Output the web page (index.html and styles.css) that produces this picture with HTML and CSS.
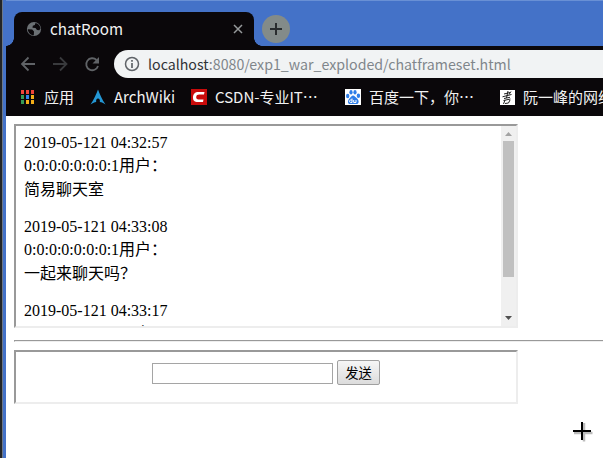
FILE: index.html
```
<!DOCTYPE html>
<html lang="zh-CN">
<head>
<meta charset="utf-8">
<title>chatRoom</title>
<link rel="stylesheet" href="styles.css">
</head>
<body>
<div class="desktop">
<div class="backdrop"></div>
<main class="window">
  <header class="tabs">
    <div class="tab">
      <svg class="globe" width="16" height="16" viewBox="0 0 16 16"><circle cx="8" cy="8" r="7.100" fill="#6b7074"/><path d="M1.800 8.200l4.400.3 1.800 2-.2 3.800C4.500 14 2 11.500 1.800 8.200zM9.500 2l-.7 2-2 .8-.3 2 3 .3 1.500 1.900 2.200.2 1.300-1.400C14.300 5 12.500 2.500 9.500 2z" fill="#0a070a"/></svg>
      <span class="title">chatRoom</span>
      <svg class="close" width="10" height="10" viewBox="0 0 10 10"><path d="M1 1l8 8M9 1l-8 8" stroke="#96999b" stroke-width="1.500"/></svg>
    </div>
    <div class="newtab"><svg width="28" height="28" viewBox="0 0 28 28"><path d="M14 8v12M8 14h12" stroke="#292d2e" stroke-width="2"/></svg></div>
  </header>
  <nav class="toolbar">
    <svg class="nav" width="88" height="28" viewBox="0 0 88 28" fill="none" stroke-width="1.800"><path d="M15 14H2.500M8.500 7.500L2 14l6.500 6.500" stroke="#606367"/><path d="M33 14h13M40 7.500l6.500 6.500-6.500 6.500" stroke="#393a3d"/><path d="M76.500 10A6 6 0 1 0 78 16" stroke="#606367"/><path d="M79 7v6.500h-6.500z" fill="#606367"/></svg>
    <div class="address">
      <svg width="16" height="16" viewBox="0 0 16 16"><circle cx="8" cy="8" r="6.500" fill="none" stroke="#5f6368" stroke-width="1.500"/><path d="M8 7v5M8 4v1.800" stroke="#5f6368" stroke-width="1.700"/></svg>
      <span class="url"><b>localhost</b>:8080/exp1_war_exploded/chatframeset.html</span>
    </div>
  </nav>
  <div class="bookmarks">
    <div class="bookmark apps"><svg width="14" height="14" viewBox="0 0 14 14"><path d="M0 0h3v4H0zM5 0h3v4H5zM10 0h3v4h-3z" fill="#f04439"/><path d="M0 5h3v4H0zM0 10h3v4H0z" fill="#359a55"/><path d="M5 5h3v4H5z" fill="#3184ec"/><path d="M10 5h3v4h-3zM5 10h3v4H5zM10 10h3v4h-3z" fill="#f5ae18"/></svg><span>应用</span></div>
    <div class="bookmark arch"><svg width="16" height="16" viewBox="0 0 16 16"><path d="M8 .5C6.500 5 3.500 11 .5 15.500c2.500-1.500 4-2.200 5.700-2.500-.4-2 .4-3.500 1.800-3.500s2.300 1.500 1.800 3.500c2 .3 3.500 1 5.700 2.500C12.500 11 9.500 5 8 .5z" fill="#2497d5"/></svg><span>ArchWiki</span></div>
    <div class="bookmark csdn"><svg width="16" height="16" viewBox="0 0 16 16"><path d="M0 0h16v16H0z" fill="#c90b0b"/><path d="M13 5.500l.5-2.500H7.500C4 3 2 5 2 8.500S4 13 6.500 13H12l.5-2.500H7.500c-1.500 0-2.500-.9-2.300-2.500.2-1.800 1.300-2.500 3-2.500z" fill="#fff"/></svg><span>CSDN-专业IT⋯</span></div>
    <div class="bookmark baidu"><svg width="16" height="16" viewBox="0 0 16 16"><path d="M0 0h16v16H0z" fill="#fff"/><g fill="#2e7de8"><ellipse cx="2.700" cy="7" rx="1.700" ry="2.200"/><ellipse cx="6" cy="3.300" rx="1.600" ry="2.300"/><ellipse cx="10" cy="3.300" rx="1.600" ry="2.300"/><ellipse cx="13.400" cy="6.800" rx="1.700" ry="2.200"/><path d="M8 6.500c-1.500 0-2 1.500-3.300 2.700C2.500 11 2.300 15 5 15c2 0 4-.2 6 0 3.500.2 3.300-4 .8-5.800C10.300 8 9.500 6.500 8 6.500z"/></g><path d="M7 9.500v4H5.500c-1.300 0-1.300-2.500 0-2.500H7M8.700 11v2.500H11V11" fill="none" stroke="#fff"/></svg><span>百度一下，你⋯</span></div>
    <div class="bookmark blog"><svg width="15" height="15" viewBox="0 0 15 15"><path d="M0 0h15v15H0z" fill="#fff"/><path d="M4 4l6-1.500M2.500 6.800l9-2.300M4 8.500l6-1.200M8 1L6.500 8M3.500 10.500l7-1.500M5 10l-1.500 4M5 13.500l3.500-.5 1.500-3M11 1.500l-2 3" fill="none" stroke="#202020"/></svg><span>阮一峰的网络</span></div>
  </div>
  <section class="page">
    <div class="frame messages">
      <div class="log">
        <p><span class="time">2019-05-121 04:32:57</span><span>0:0:0:0:0:0:0:1用户：</span><span>简易聊天室</span></p>
        <p><span class="time">2019-05-121 04:33:08</span><span>0:0:0:0:0:0:0:1用户：</span><span>一起来聊天吗？</span></p>
        <p><span class="time">2019-05-121 04:33:17</span><span>0:0:0:0:0:0:0:1用户：</span></p>
      </div>
      <div class="scrollbar">
        <svg width="15" height="15" viewBox="0 0 15 15"><path d="M4 10h7L7.500 6z" fill="#a3a3a3"/></svg>
        <div class="thumb"></div>
        <svg class="down" width="15" height="15" viewBox="0 0 15 15"><path d="M4 5h7L7.500 9z" fill="#505050"/></svg>
      </div>
    </div>
    <hr>
    <form class="frame send"><input type="text" aria-label="消息"><button type="button">发送</button></form>
  </section>
</main>
</div>
<svg class="cursor" width="22" height="22" viewBox="0 0 22 22"><path d="M12 2v18.500M2 12h18.500" stroke="#bbb" stroke-width="2.500"/><path d="M10 1v18M1 10h18" stroke="#000" stroke-width="2"/></svg>
</body>
</html>
```
FILE: styles.css
```
* { box-sizing: border-box; }
body { margin: 0; width: 603px; height: 458px; overflow: hidden; background: #fff; }
svg { display: block; flex: none; }
.desktop { display: flex; height: 458px; }
.backdrop { width: 3px; flex: none; background: #232527; border-right: 1px solid #6d7888; }
.window { width: 600px; flex: none; height: 458px; border-left: 3px solid #4472c8; overflow: hidden; font-family: "Noto Sans CJK SC", sans-serif; }
.tabs { height: 46px; background: #4472c8; border-top: 1px solid #6990d5; display: flex; padding: 11px 0 0 8px; }
.tab { width: 240px; height: 34px; background: #0a070a; border-radius: 8px 8px 0 0; display: flex; align-items: center; padding: 0 16px 0 12px; position: relative; }
.tab::before, .tab::after { content: ""; position: absolute; bottom: 0; width: 8px; height: 8px; }
.tab::before { left: -8px; background: radial-gradient(circle at 0 0, transparent 7.5px, #0a070a 8px); }
.tab::after { right: -8px; background: radial-gradient(circle at 100% 0, transparent 7.5px, #0a070a 8px); }
.title { margin: -2px 0 0 8px; font-size: 15.2px; line-height: 24px; color: #f1f1f1; flex: 1; }
.close { margin-right: -5px; }
.newtab { width: 28px; height: 28px; border-radius: 50%; background: #838b89; margin: 3px 0 0 8px; }
.toolbar { height: 36px; background: #0a070a; display: flex; align-items: center; padding-left: 14px; }
.nav { margin-right: 6px; }
.address { flex: 1; height: 28px; background: #f1f3f4; border-radius: 14px 0 0 14px; display: flex; align-items: center; padding-left: 10px; }
.url { margin: -1px 0 0 8px; font-size: 14.2px; line-height: 22px; color: #80868b; white-space: nowrap; }
.url b { font-weight: 400; color: #303236; }
.bookmarks { height: 34px; background: #0a070a; display: flex; align-items: center; padding: 0 0 4px 15px; color: #f1f1f1; font-size: 15px; line-height: 22px; white-space: nowrap; }
.bookmark { display: flex; align-items: center; gap: 8px; flex: none; }
.bookmark span { margin-top: -1px; }
.apps { width: 69px; gap: 9px; }
.arch { width: 101px; }
.csdn { width: 154px; }
.baidu { width: 155px; }
.page { padding: 8px 0 0 8px; color: #000; }
.frame { width: 504px; border: 2px solid; border-color: #999 #ededed #ededed #999; }
.messages { height: 204px; display: flex; }
.log { flex: 1; overflow: hidden; padding: 6px 8px; font-family: "Liberation Serif", "Noto Sans CJK SC", serif; font-size: 16px; }
.log p { margin: 0 0 16px; height: 68px; }
.log span { display: block; height: 24px; line-height: 24px; }
.log .time { height: 22px; line-height: 21px; }
.scrollbar { width: 15px; background: #f0f0f0; display: flex; flex-direction: column; }
.thumb { width: 11px; height: 136px; margin-left: 2px; background: #c0c0c0; }
.down { margin-top: auto; }
hr { height: 2px; margin: 12px 0 8px; border: 0; border-top: 1px solid #999; border-bottom: 1px solid #eee; border-left: 1px solid #999; }
.send { height: 54px; display: flex; align-items: flex-start; padding: 8px 0 0 136px; }
.send input { width: 181px; height: 21px; margin-top: 3px; border: 1px solid #a5a5a5; background: #fff; padding: 1px; }
.send button { width: 43px; height: 25px; margin-left: 4px; padding: 0; border: 1px solid #a0a0a0; border-radius: 2px; background: linear-gradient(#f6f6f6, #dcdcdc); color: #000; font: 13.333px/20px "Noto Sans CJK SC", sans-serif; }
.cursor { position: absolute; left: 572px; top: 421px; }
```
